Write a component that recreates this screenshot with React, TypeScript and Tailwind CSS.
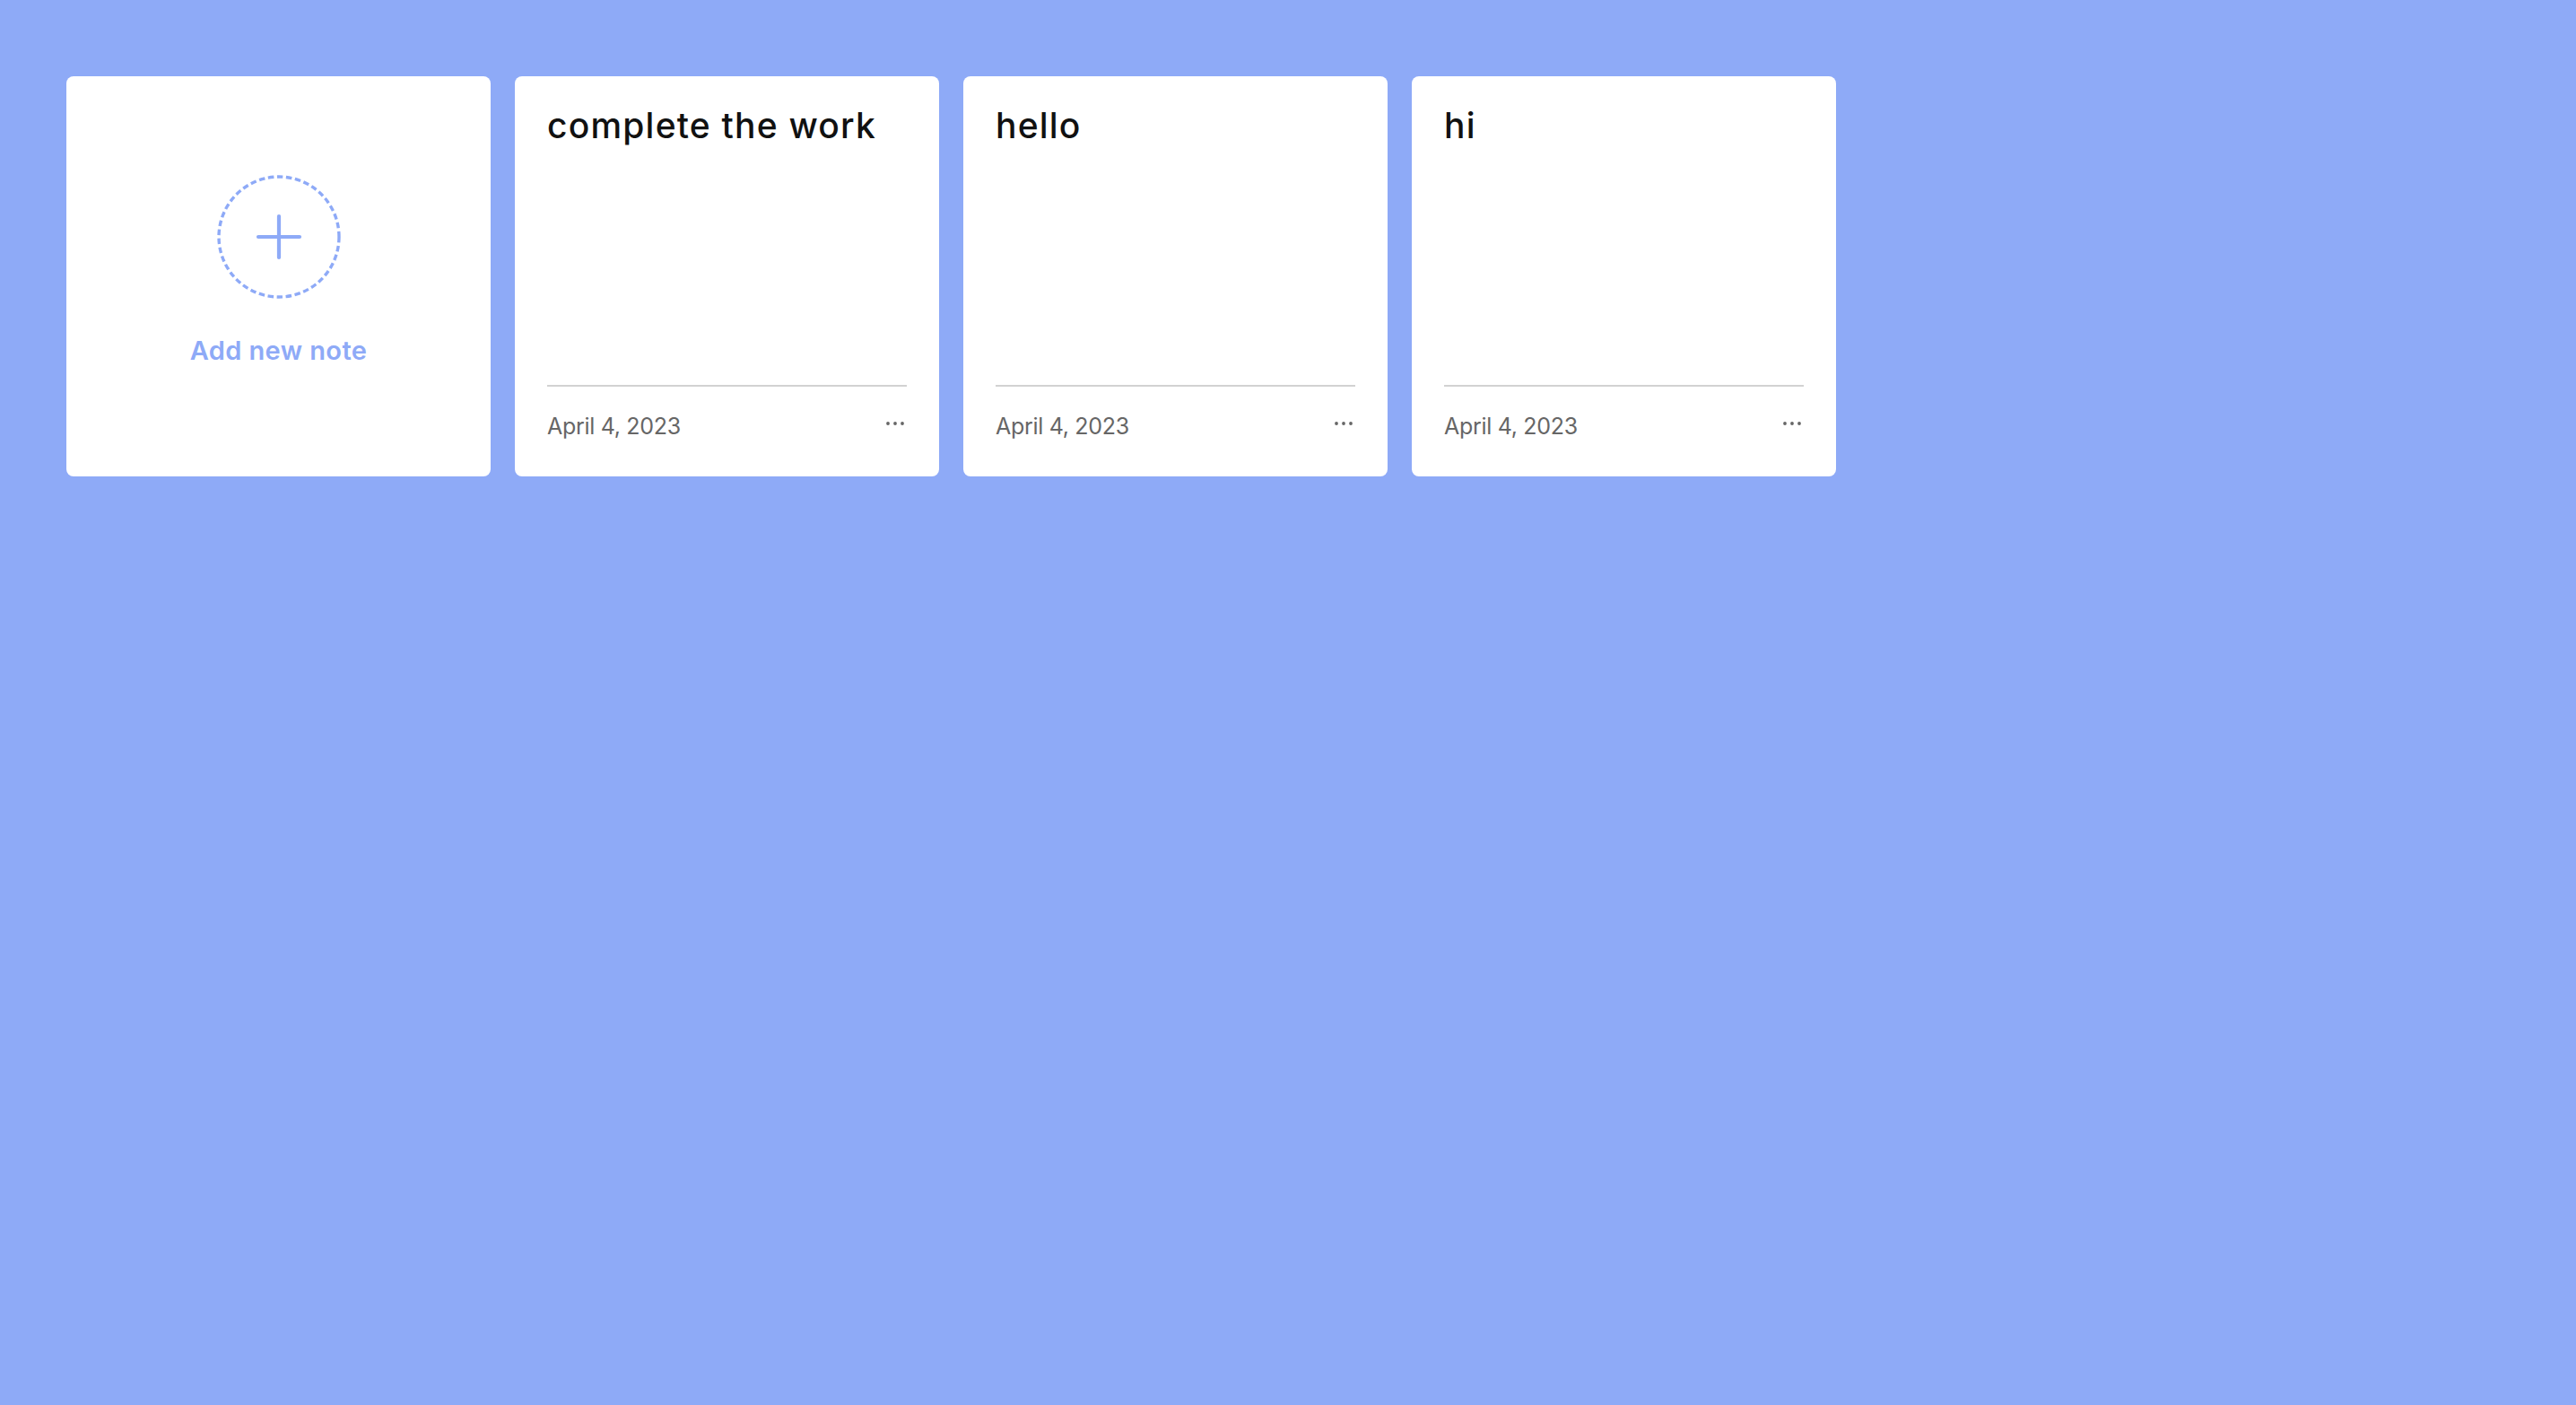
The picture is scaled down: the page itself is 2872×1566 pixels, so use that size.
import React from 'react';

type Note = { id: number; title: string; date: string };

const notes: Note[] = [
  { id: 1, title: 'complete the work', date: 'April 4, 2023' },
  { id: 2, title: 'hello', date: 'April 4, 2023' },
  { id: 3, title: 'hi', date: 'April 4, 2023' },
];

function AddNoteCard() {
  return (
    <div className="w-[473px] h-[446px] rounded-[8px] bg-white flex flex-col items-center pt-[109px] cursor-pointer">
      <svg width="140" height="140" viewBox="0 0 140 140" fill="none">
        <circle cx="70" cy="70" r="67" stroke="#8eaaf7" strokeWidth="3.4" strokeDasharray="6.5 3.6" />
        <path d="M70 47v46M47 70h46" stroke="#8eaaf7" strokeWidth="4.2" strokeLinecap="round" />
      </svg>
      <p className="mt-[42px] text-[29px] leading-none font-semibold tracking-[0.4px] text-[#8eaaf7]">Add new note</p>
    </div>
  );
}

function NoteCard({ note }: { note: Note }) {
  return (
    <div className="w-[473px] h-[446px] rounded-[8px] bg-white flex flex-col px-[36px] pt-[35px] pb-[36px]">
      <h2 className="text-[39px] leading-none font-medium tracking-[1.2px] text-[#111]">{note.title}</h2>
      <div className="flex-1" />
      <div className="h-[2px] bg-[#d2d2d2]" />
      <div className="mt-[25px] flex items-start justify-between">
        <span className="text-[25px] leading-[39px] tracking-[-0.3px] text-[#666]">{note.date}</span>
        <svg width="22" height="6" viewBox="0 0 22 6" className="mt-[13px] mr-[2px]">
          <circle cx="3" cy="3" r="1.9" fill="#666" />
          <circle cx="11" cy="3" r="1.9" fill="#666" />
          <circle cx="19" cy="3" r="1.9" fill="#666" />
        </svg>
      </div>
    </div>
  );
}

export default function App() {
  return (
    <div className="min-h-screen bg-[#8eaaf7] pl-[74px] pt-[85px] font-['Inter',sans-serif]">
      <div className="flex gap-[27px]">
        <AddNoteCard />
        {notes.map(n => (
          <NoteCard key={n.id} note={n} />
        ))}
      </div>
    </div>
  );
}
